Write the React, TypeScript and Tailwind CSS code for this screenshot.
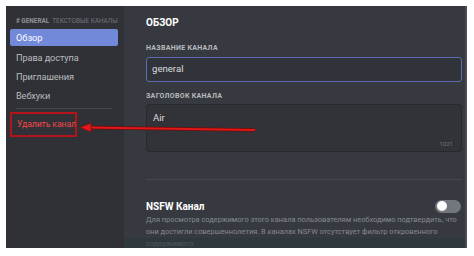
import React from 'react';

const navItems = ['Права доступа', 'Приглашения', 'Вебхуки'];

export default function App() {
  return (
    <div className="relative w-[474px] h-[256px] bg-white pt-[6px] pl-[6px]" style={{ fontFamily: 'Roboto, "Noto Sans", sans-serif' }}>
      <div className="flex w-[461px] h-[242px] bg-[#36393f] overflow-hidden border-r-2 border-[#4a4d53]">
        {/* Sidebar */}
        <div className="w-[118px] shrink-0 bg-[#2f3136] pl-[4px] pr-[6px] pt-[11px]">
          <div className="pl-[6px] h-[9px] flex items-center gap-[3px] text-[6.4px] leading-none font-bold uppercase text-[#8e9297] whitespace-nowrap">
            <span># general</span>
            <span className="font-normal text-[#72767d]">текстовые каналы</span>
          </div>
          <div className="mt-[3px] h-[17px] mb-[2px] rounded-[2px] bg-[#7289da] pl-[6px] flex items-center text-[9.2px] text-white">
            Обзор
          </div>
          {navItems.map((item) => (
            <div key={item} className="h-[19px] pl-[6px] flex items-center text-[9.2px] tracking-[-0.1px] text-[#b9bbbe]">
              {item}
            </div>
          ))}
          <div className="mx-[6px] mt-[3px] h-px bg-[#42454a]" />
          <div className="mt-[3px] w-[67px] h-[25px] border-2 border-[#b3141a] pl-[5px] flex items-center text-[8.7px] tracking-[-0.1px] text-[#f04747] whitespace-nowrap">
            Удалить канал
          </div>
        </div>

        {/* Content */}
        <div className="relative flex-1 min-w-0 pl-[22px] pr-[3px] pt-[10px]">
          <div className="h-[13px] flex items-center text-[10px] font-bold text-white">ОБЗОР</div>
          <div className="mt-[15px] h-[9px] flex items-center text-[7px] font-bold uppercase tracking-[0.3px] text-[#b9bbbe]">Название канала</div>
          <div className="mt-[4px] h-[25px] rounded-[3px] border border-[#5f6bb0] bg-[#303339] pl-[5px] flex items-center text-[9.6px] text-[#dcddde]">
            general
          </div>
          <div className="mt-[10px] h-[9px] flex items-center text-[7px] font-bold uppercase tracking-[0.3px] text-[#b9bbbe]">Заголовок канала</div>
          <div className="relative mt-[3px] h-[48px] rounded-[3px] border border-[#27292d] bg-[#313338] pl-[6px] pt-[6px] text-[9.6px] text-[#dcddde]">
            Air
            <span className="absolute right-[8px] bottom-[3px] text-[6px] text-[#72767d]">1021</span>
          </div>
          <div className="mt-[27px] h-px bg-[#44474d]" />
          <div className="mt-[19px] flex items-center justify-between h-[14px]">
            <span className="text-[10px] font-bold text-white">NSFW Канал</span>
            <div className="relative w-[26px] h-[13px] rounded-full bg-[#72767d] mr-[1px]">
              <div className="absolute left-[2px] top-[1.5px] w-[10px] h-[10px] rounded-full bg-white" />
            </div>
          </div>
          <p className="mt-[1px] text-[7.4px] leading-[12px] text-[#868a90] whitespace-nowrap">
            Для просмотра содержимого этого канала пользователям необходимо подтвердить, что
            <br />
            они достигли совершеннолетия. В каналах NSFW отсутствует фильтр откровенного
            <br />
            содержимого.
          </p>
          <div className="absolute left-0 right-0 bottom-0 h-[10px] bg-[#29393c] opacity-60 pointer-events-none" />
        </div>
      </div>

      {/* Annotation arrow */}
      <svg className="absolute left-0 top-0 pointer-events-none" width="474" height="256" viewBox="0 0 474 256">
        <line x1="88" y1="127.5" x2="255" y2="130" stroke="#6e0c0c" strokeWidth="3.4" />
        <line x1="88" y1="127.5" x2="255" y2="130" stroke="#e01818" strokeWidth="1.8" />
        <polygon points="80,127.5 91,123 91,132" fill="#e01818" stroke="#7a0c0c" strokeWidth="0.6" />
      </svg>
    </div>
  );
}
